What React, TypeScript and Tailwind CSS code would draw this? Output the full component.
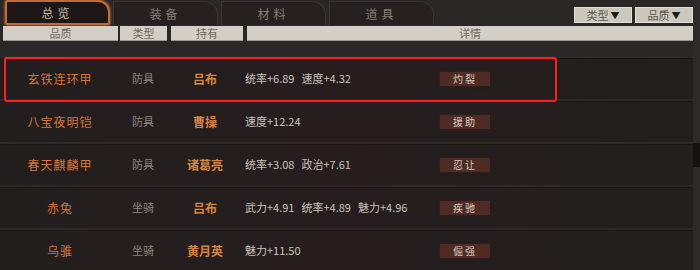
import React from 'react';

// Item overview panel – game UI style list of equipment

type Row = {
  name: string;
  kind: string;
  owner: string;
  stats: string[];
  tag: string;
};

const ROWS: Row[] = [
  { name: '玄铁连环甲', kind: '防具', owner: '吕布', stats: ['统率+6.89', '速度+4.32'], tag: '灼裂' },
  { name: '八宝夜明铠', kind: '防具', owner: '曹操', stats: ['速度+12.24'], tag: '援助' },
  { name: '春天麒麟甲', kind: '防具', owner: '诸葛亮', stats: ['统率+3.08', '政治+7.61'], tag: '忍让' },
  { name: '赤兔', kind: '坐骑', owner: '吕布', stats: ['武力+4.91', '统率+4.89', '魅力+4.96'], tag: '疾驰' },
  { name: '乌骓', kind: '坐骑', owner: '黄月英', stats: ['魅力+11.50'], tag: '倔强' },
];

const TABS = ['总览', '装备', '材料', '道具'];

const font = "font-['Noto_Sans_CJK_SC','Noto_Sans',sans-serif]";

export default function App() {
  const headCls = 'h-[15px] flex items-center justify-center bg-[#d3cfc6] text-[11px] leading-none text-[#6f675e] shadow-[inset_0_-1px_0_#9d978d]';

  return (
    <div className={`w-[700px] h-[270px] overflow-hidden bg-[#2a2727] flex ${font}`}>
      <div className="w-[693px] flex flex-col">
        {/* ── Tabs + filters ── */}
        <div className="h-[25px] flex items-end pl-[5px] gap-[3px]">
          {TABS.map((t, i) => (
            <div
              key={t}
              className={
                i === 0
                  ? 'w-[105px] h-[25px] flex items-center justify-center bg-[#1d1817] border-2 border-[#c06a35] rounded-tr-[12px] rounded-tl-[3px] rounded-bl-[2px] rounded-br-[2px] shadow-[0_0_3px_#e0793a] text-[12px] text-[#c9bca6] tracking-[4px]'
                  : 'w-[105px] h-[24px] flex items-center justify-center bg-[#262020] border border-[#3c3432] border-b-0 rounded-tr-[14px] text-[12px] text-[#857c76] tracking-[4px]'
              }
            >
              {t}
            </div>
          ))}
          <div className="flex-1" />
          <div className="flex gap-[3px] self-start mt-[7px]">
            {['类型', '品质'].map(f => (
              <div
                key={f}
                className="w-[58px] h-[16px] flex items-center justify-center gap-[2px] bg-[#cdc8be] border border-[#e4e0d8] text-[11px] leading-none text-[#5d574f]"
              >
                {f}
                <span className="text-[9px] text-[#1c1a18]">▼</span>
              </div>
            ))}
          </div>
        </div>

        {/* ── Column header ── */}
        <div className="flex mt-[1px] pl-[3px] gap-[2px]">
          <div className={`${headCls} w-[115px]`}>品质</div>
          <div className={`${headCls} w-[47px]`}>类型</div>
          <div className={`${headCls} w-[72px] ml-[2px]`}>持有</div>
          <div className={`${headCls} flex-1 ml-[2px]`}>详情</div>
        </div>

        {/* ── Rows ── */}
        <div className="relative mt-[15px] flex flex-col">
          {ROWS.map((r, i) => (
            <div
              key={r.name}
              className="h-[43px] flex items-center bg-gradient-to-r from-[#231e1e] via-[#261e1e] to-[#231f1f] border-t-2 border-[#2f2929] shadow-[inset_0_1px_0_#1a1616]"
            >
              <div className="w-[120px] text-center text-[12px] text-[#d6743a] tracking-[1px]">{r.name}</div>
              <div className="w-[46px] text-center text-[11px] text-[#8b8580]">{r.kind}</div>
              <div className="w-[78px] text-center text-[12px] font-bold text-[#d8843f]">{r.owner}</div>
              <div className="w-[196px] flex gap-[7px] text-[11px] text-[#c9c3ba] pl-[1px]">
                {r.stats.map(s => (
                  <span key={s}>{s}</span>
                ))}
              </div>
              <div className="w-[50px] h-[14px] flex items-center justify-center bg-[#4e2c24] text-[10px] text-[#d8cabb] tracking-[2px] shadow-[0_0_3px_#3a2019]">
                {r.tag}
              </div>
              {i === 0 && (
                <div className="absolute left-[4px] top-[1px] w-[553px] h-[45px] border-2 border-[#ff1f1f] rounded-[3px] pointer-events-none" />
              )}
            </div>
          ))}
        </div>
      </div>

      {/* ── Scroll strip ── */}
      <div className="w-[7px] flex flex-col bg-[#2c2a2a]">
        <div className="h-[143px]" />
        <div className="h-[24px] bg-[#141212]" />
      </div>
    </div>
  );
}
